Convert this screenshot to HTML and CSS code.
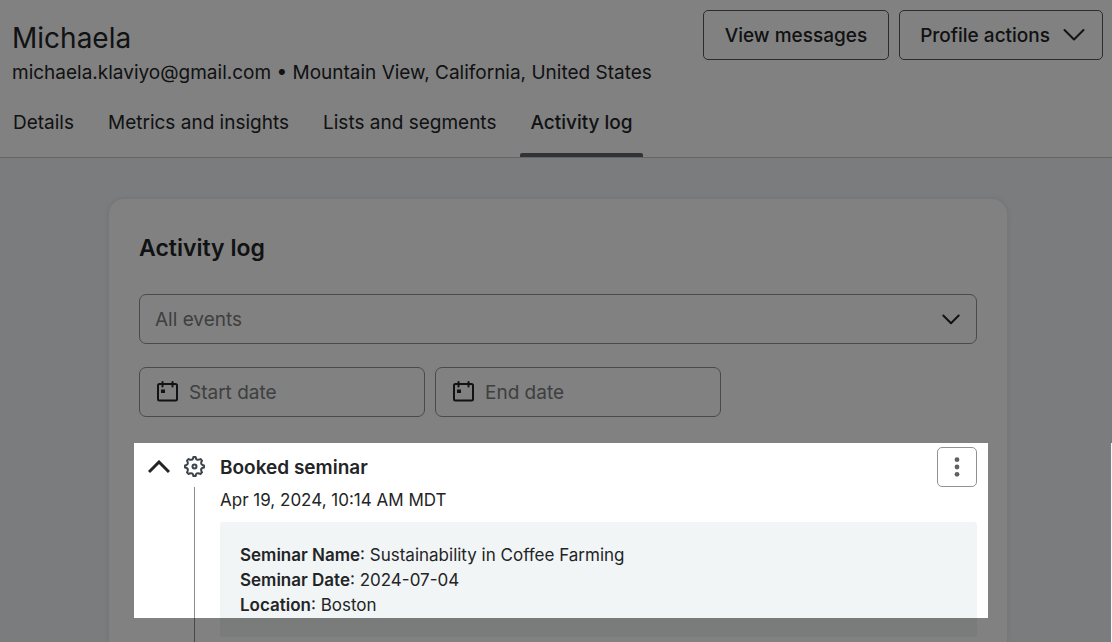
FILE: index.html
```html
<!DOCTYPE html>
<html lang="en">
<head>
<meta charset="utf-8">
<title>Michaela – Activity log</title>
<link rel="stylesheet" href="styles.css">
</head>
<body>
<div class="page">
  <header class="profile">
    <div class="profile-top">
      <div class="identity">
        <h1 class="name">Michaela</h1>
        <p class="meta">michaela.klaviyo@gmail.com • Mountain View, California, United States</p>
      </div>
      <div class="actions">
        <button class="btn" type="button">View messages</button>
        <button class="btn" type="button">Profile actions
          <svg class="btn-icon" viewBox="0 0 22 14" aria-hidden="true"><path d="M1.5 2 11 11.5 20.5 2"/></svg>
        </button>
      </div>
    </div>
    <nav class="tabs">
      <a class="tab" href="#details">Details</a>
      <a class="tab" href="#metrics">Metrics and insights</a>
      <a class="tab" href="#lists">Lists and segments</a>
      <a class="tab tab-active" href="#activity" aria-current="page">Activity log</a>
    </nav>
  </header>

  <main class="content">
    <section class="card">
      <h2 class="card-title">Activity log</h2>
      <div class="select-wrap">
        <select class="field select" aria-label="Event type">
          <option>All events</option>
        </select>
        <svg class="select-icon" viewBox="0 0 18 11" aria-hidden="true"><path d="M1.3 1.5 9 9.2 16.700 1.5"/></svg>
      </div>
      <div class="dates">
        <label class="field date">
          <svg class="calendar" viewBox="0 0 21 22" aria-hidden="true"><rect x="1" y="3" width="19" height="16.500" rx="1.500"/><path d="M5.5 1v4.500M15.500 1v4.500"/><rect class="day" x="4" y="8.500" width="4" height="3.500"/></svg>
          <input class="date-input" type="text" placeholder="Start date" aria-label="Start date">
        </label>
        <label class="field date">
          <svg class="calendar" viewBox="0 0 21 22" aria-hidden="true"><rect x="1" y="3" width="19" height="16.500" rx="1.500"/><path d="M5.5 1v4.500M15.500 1v4.500"/><rect class="day" x="4" y="8.500" width="4" height="3.500"/></svg>
          <input class="date-input" type="text" placeholder="End date" aria-label="End date">
        </label>
      </div>

      <article class="event">
        <button class="toggle" type="button" aria-label="Collapse event">
          <svg class="toggle-icon" viewBox="0 0 22 14" aria-hidden="true"><path d="M1 12 11 2 21 12"/></svg>
        </button>
        <div class="rail">
          <svg class="gear" viewBox="0 0 21 21" aria-hidden="true"><path d="M9.400 1h2.200Q12 3.700 13.500 3.800 15 4 16.400 3L18 4.600Q17 6 17.200 7.500 17.300 9 20 9.400v2.200Q17.300 12 17.200 13.500 17 15 18 16.400L16.400 18Q15 17 13.500 17.200 12 17.300 11.600 20H9.400Q9 17.300 7.500 17.200 6 17 4.600 18L3 16.400Q4 15 3.800 13.500 3.700 12 1 11.600V9.400Q3.700 9 3.800 7.500 4 6 3 4.600L4.600 3Q6 4 7.500 3.800 9 3.700 9.400 1Z"/><circle cx="10.500" cy="10.500" r="2"/></svg>
          <span class="line"></span>
        </div>
        <div class="event-main">
          <div class="event-head">
            <h3 class="event-title">Booked seminar</h3>
            <button class="kebab" type="button" aria-label="More options">
              <svg class="kebab-icon" viewBox="0 0 6 20" aria-hidden="true"><circle cx="3" cy="2.700" r="2.400"/><circle cx="3" cy="10" r="2.400"/><circle cx="3" cy="17.300" r="2.400"/></svg>
            </button>
          </div>
          <p class="event-time">Apr 19, 2024, 10:14 AM MDT</p>
          <div class="event-data">
            <p><strong>Seminar Name</strong>: Sustainability in Coffee Farming</p>
            <p><strong>Seminar Date</strong>: 2024-07-04</p>
            <p><strong>Location</strong>: Boston</p>
          </div>
        </div>
        <div class="spotlight"></div>
      </article>
    </section>
    <div class="edge"></div>
  </main>
</div>
</body>
</html>
```
FILE: styles.css
```css
* { box-sizing: border-box; }

body, h1, h2, h3, p { margin: 0; }

body {
  background: #fff;
  color: #232426;
  font-family: Inter, "Liberation Sans", sans-serif;
  font-size: 19px;
}

button, input, select { font: inherit; color: inherit; }

svg { flex: none; fill: none; stroke: currentColor; stroke-width: 2; stroke-linecap: round; stroke-linejoin: round; }

.page {
  display: flex;
  flex-direction: column;
  min-height: 100vh;
  overflow: hidden;
}

.profile { border-bottom: 1px solid #c3c7cb; }

.profile-top {
  display: flex;
  justify-content: space-between;
  align-items: flex-start;
  padding: 10px 9px 0 12px;
}

.identity { padding-top: 10px; }

.name { font-size: 28px; font-weight: 400; line-height: 36px; }

.meta { margin-top: 5px; line-height: 24px; }

.actions { display: flex; gap: 10px; }

.btn {
  display: flex;
  align-items: center;
  gap: 13px;
  height: 50px;
  padding: 0 21px;
  border: 1px solid #55585b;
  border-radius: 5px;
  background: none;
  font-weight: 500;
}

.btn:last-child { padding: 0 17px 0 20px; }

.btn-icon { width: 22px; height: 14px; }

.tabs {
  display: flex;
  gap: 14px;
  margin-top: 26px;
  padding-left: 3px;
}

.tab {
  padding: 0 10px 18px;
  border-bottom: 4px solid transparent;
  color: inherit;
  line-height: 24px;
  text-decoration: none;
}

.tab-active { position: relative; font-weight: 500; }

.tab-active::after {
  content: "";
  position: absolute;
  inset: auto 0 -4px;
  height: 4px;
  border-radius: 2px 2px 0 0;
  background: #626366;
}

.content {
  position: relative;
  display: flex;
  flex: 1;
  padding: 41px 105px 0 109px;
  background: #f3f6f9;
}

.card {
  display: flex;
  flex: 1;
  flex-direction: column;
  min-width: 0;
  padding: 30px 30px 0;
  border-radius: 15px 15px 0 0;
  background: #fff;
  box-shadow: 0 0 6px rgba(30, 40, 50, .12);
}

.card-title { font-size: 23px; font-weight: 600; line-height: 38px; }

.field {
  height: 50px;
  border: 1px solid #909294;
  border-radius: 7px;
  background: none;
  color: #7c7d80;
}

.select-wrap { display: grid; align-items: center; margin-top: 27px; }

.select {
  grid-area: 1 / 1;
  width: 100%;
  padding: 0 50px 0 15px;
  appearance: none;
}

.select-icon {
  grid-area: 1 / 1;
  justify-self: end;
  width: 18px;
  height: 11px;
  margin-right: 17px;
  pointer-events: none;
}

.dates { display: flex; gap: 10px; margin-top: 23px; }

.date {
  display: flex;
  flex: 0 1 286px;
  align-items: center;
  gap: 11px;
  min-width: 0;
  padding: 0 17px;
}

.calendar { width: 21px; height: 22px; color: #232426; }

.day { fill: currentColor; stroke: none; }

.date-input {
  flex: 1;
  min-width: 0;
  padding: 0;
  border: 0;
  outline: 0;
  background: none;
}

.date-input::placeholder { color: #7c7d80; opacity: 1; }

.event {
  position: relative;
  display: grid;
  flex: 1;
  grid-template-columns: 39px 33px 1fr;
  margin-top: 30px;
}

.toggle {
  display: flex;
  align-items: center;
  justify-content: center;
  height: 40px;
  padding: 0;
  border: 0;
  background: none;
}

.toggle-icon { width: 22px; height: 14px; stroke-width: 3; stroke-linecap: butt; stroke-linejoin: miter; }

.rail { display: flex; flex-direction: column; align-items: center; }

.gear { width: 21px; height: 21px; margin: 9px 0 10px; color: #3b444d; }

.line { flex: 1; width: 1px; background: #8b8c8e; }

.event-main { padding-left: 9px; font-size: 17px; line-height: 25px; }

.event-head { display: flex; align-items: center; justify-content: space-between; }

.event-title { font-size: 19px; font-weight: 600; }

.kebab {
  display: grid;
  place-items: center;
  width: 40px;
  height: 40px;
  padding: 0;
  border: 1px solid #909294;
  border-radius: 5px;
  background: #fff;
  color: #606164;
}

.kebab-icon { width: 6px; height: 20px; fill: currentColor; stroke: none; }

.event-time { padding-top: 1px; }

.event-data {
  margin: 9px 0 5px;
  padding: 21px 20px 19px;
  border-radius: 3px;
  background: #f1f5f6;
}

.event-data strong { font-weight: 600; }

/* Everything outside the highlighted event is dimmed. */
.spotlight {
  position: absolute;
  z-index: 1;
  top: -4px;
  right: -11px;
  left: -5px;
  height: 175px;
  box-shadow: 0 0 0 200vmax rgba(0, 0, 0, .494);
  pointer-events: none;
}

.edge {
  position: absolute;
  z-index: 2;
  top: 285px;
  right: 0;
  bottom: 0;
  width: 1px;
  background: #f3f6f9;
}
```
